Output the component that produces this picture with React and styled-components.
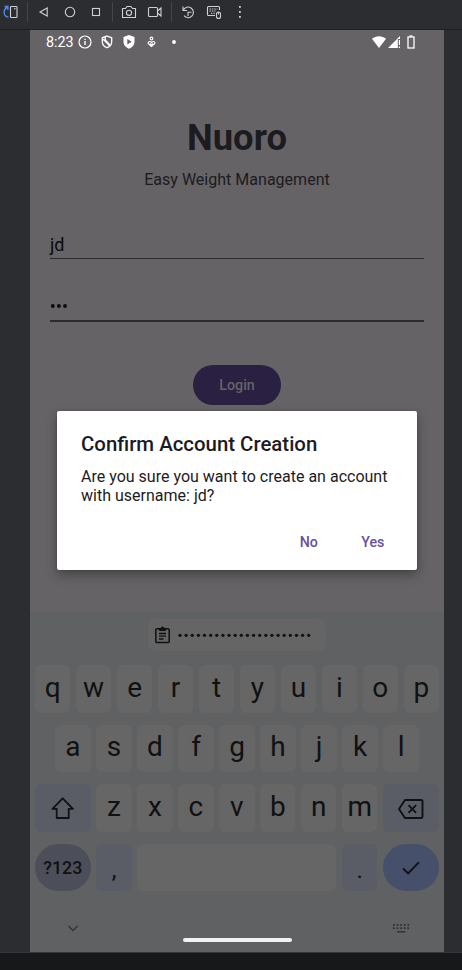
import React from "react";
import styled, { createGlobalStyle } from "styled-components";

const Global = createGlobalStyle`
  * { box-sizing: border-box; }
  html, body { margin: 0; background: #2b2d30; }
  body { font-family: Roboto, "Liberation Sans", sans-serif; }
  svg { display: block; flex: none; overflow: visible; }
`;

const Window = styled.div`
  width: 462px;
  height: 970px;
  overflow: hidden;
  display: flex;
  flex-direction: column;
  background: #2b2d30;
`;

const Toolbar = styled.header`
  height: 30px;
  flex: none;
  padding: 0 0 5px 3px;
  display: flex;
  align-items: center;
  border-bottom: 1px solid #1e1f22;
`;

const Tool = styled.span`
  width: ${(p) => p.$w}px;
  flex: none;
  display: flex;
  justify-content: center;
`;

const Divider = styled.span`
  width: 1px;
  height: 20px;
  background: #43454a;
`;

const Device = styled.main`
  position: relative;
  width: 414px;
  height: 922px;
  margin-left: 30px;
  flex: none;
  display: flex;
  flex-direction: column;
  background: #666366;
`;

const StatusBar = styled.div`
  height: 24px;
  padding: 0 23px 0 16px;
  display: flex;
  align-items: center;
  color: #fff;
`;

const Clock = styled.span`
  width: 32.5px;
  font-size: 14.3px;
  line-height: 24px;
  white-space: nowrap;
`;

const StatusIcon = styled.span`
  width: ${(p) => p.$w}px;
  display: flex;
  justify-content: center;
`;

const Spacer = styled.span`
  flex: 1;
`;

const Login = styled.section`
  flex: 1;
  padding: 0 20px;
  display: flex;
  flex-direction: column;
  align-items: center;
  color: #1c1b1f;
`;

const Brand = styled.h1`
  margin: 62px 0 0;
  font-size: 36.4px;
  line-height: 44px;
  font-weight: 700;
`;

const Tagline = styled.p`
  margin: 10px 0 0;
  font-size: 16.05px;
  line-height: 20px;
`;

const Field = styled.div`
  width: 374px;
  height: ${(p) => p.$h}px;
  margin-top: ${(p) => p.$gap}px;
  border-bottom: ${(p) => p.$line}px solid #2c2a31;
  color: #0b0b0c;
  font-size: 18px;
  line-height: 27px;
`;

const LoginButton = styled.button`
  width: 88.5px;
  height: 40.5px;
  margin-top: 42.5px;
  border: 0;
  padding: 0 0 0 0;
  border-radius: 20.5px;
  background: #292042;
  color: #666366;
  font: 500 14.3px Roboto, sans-serif;
`;

const Dialog = styled.div`
  position: absolute;
  left: 27px;
  top: 381.3px;
  width: 360px;
  height: 158.7px;
  padding: 20.7px 24px 0;
  border-radius: 2px;
  background: #fff;
  color: #1c1b1f;
  box-shadow: 0 5px 12px rgba(0, 0, 0, 0.32), 0 0 3px rgba(0, 0, 0, 0.15);
`;

const DialogTitle = styled.h2`
  margin: 0;
  font-size: 20.4px;
  line-height: 24px;
  font-weight: 500;
  white-space: nowrap;
`;

const DialogText = styled.p`
  margin: 11px 0 0;
  font-size: 16.02px;
  line-height: 19px;
  white-space: nowrap;
`;

const DialogActions = styled.div`
  margin-top: 27.3px;
  padding-right: 8.7px;
  display: flex;
  justify-content: flex-end;
  gap: 43.3px;
`;

const TextButton = styled.button`
  border: 0;
  padding: 0;
  background: none;
  color: #6750a4;
  font: 500 14.2px/20px Roboto, sans-serif;
`;

const Keyboard = styled.section`
  height: 340px;
  flex: none;
  padding: 7px 5px 0;
  background: #606163;
  color: #101112;
`;

const Chip = styled.div`
  width: 178px;
  height: 32px;
  margin: 0 auto 14px 113px;
  padding-left: 7px;
  border-radius: 7px;
  display: flex;
  align-items: center;
  gap: 7.5px;
  background: #656566;
`;

const KeyRow = styled.div`
  height: 47.6px;
  margin-bottom: 12px;
  padding: 0 ${(p) => p.$inset || 0}px;
  display: flex;
  gap: 5.6px;
`;

const keyTone = {
  letter: "#666666",
  side: "#5a5d66",
  symbols: "#4c4f5a",
  enter: "#47506a",
};

const Key = styled.button`
  flex: ${(p) => (p.$w ? `0 0 ${p.$w}px` : "1 1 0")};
  min-width: 0;
  height: 100%;
  border: 0;
  padding: ${(p) => p.$pad || "0 0 2px"};
  border-radius: ${(p) => (p.$round ? 24 : 6)}px;
  display: flex;
  align-items: center;
  justify-content: center;
  background: ${(p) => keyTone[p.$tone || "letter"]};
  color: inherit;
  font-family: Roboto, sans-serif;
  font-size: ${(p) => p.$size || 28}px;
  font-weight: ${(p) => p.$weight || 400};
  line-height: 1;
`;

const NavBar = styled.div`
  height: 50px;
  padding: 0 30.5px 0 33px;
  display: flex;
  align-items: center;
  justify-content: space-between;
  color: #303133;
`;

const HomeHandle = styled.span`
  width: 109px;
  height: 4px;
  margin: 24px 0 0 3.5px;
  border-radius: 2px;
  background: #f2f2f2;
`;

const Footer = styled.footer`
  flex: 1;
  border-top: 1px solid #36383b;
  background: #17181a;
`;

const line = { fill: "none", stroke: "#ced0d6", strokeWidth: 1.1 };

const dots = (n, start, step) => Array.from({ length: n }, (_, i) => start + i * step);

const RotateIcon = () => (
  <svg width="16" height="16" {...line}>
    <rect x="4.5" y="2.5" width="6.5" height="11" rx=".8" />
    <path d="M8 4.8h1.6" />
    <path d="M2.5 13.2C-.5 12.8-1.9 10.8-1.9 8.3-1.9 6-.6 4.3 1.5 2.9M-1.5 2.5H1.9V6" stroke="#548af7" strokeWidth="1.3" />
  </svg>
);
const BackIcon = () => (
  <svg width="10" height="10" {...line}><path d="M8.2 1v8L1 5z" /></svg>
);
const CircleIcon = () => (
  <svg width="12" height="12" {...line}><circle cx="6" cy="6" r="4.7" /></svg>
);
const SquareIcon = () => (
  <svg width="10" height="10" {...line}><rect x="1.5" y="1.5" width="7" height="7" /></svg>
);
const CameraIcon = () => (
  <svg width="16" height="14" {...line}>
    <path d="M1.5 3.5h3L6 1.5h4l1.5 2h3v9h-13z" strokeLinejoin="round" />
    <circle cx="8" cy="7.8" r="2.6" />
  </svg>
);
const VideoIcon = () => (
  <svg width="16" height="12" {...line}>
    <rect x="1.5" y="1.5" width="9" height="9" rx="1" />
    <path d="M10.5 5l3.5-3v8l-3.5-3" />
  </svg>
);
const HistoryIcon = () => (
  <svg width="14" height="14" {...line}>
    <path d="M2 1.5v4h4M2.3 5.2A5.3 5.3 0 1 1 3 10.7M7 11V7.2h3.5" />
  </svg>
);
const InputIcon = () => (
  <svg width="16" height="15" {...line}>
    <path d="M9 10.5H2.5a1 1 0 0 1-1-1v-7a1 1 0 0 1 1-1h10a1 1 0 0 1 1 1V5" />
    <path d="M3.5 4h8M3.5 6h6M5 8.3h4" strokeDasharray="1.4 1" />
    <rect x="10.5" y="7" width="4" height="6.5" rx="2" />
    <path d="M12.5 7v2.5" />
  </svg>
);
const MoreIcon = () => (
  <svg width="4" height="14" fill="#ced0d6">
    {dots(3, 2, 5).map((y) => <rect key={y} x="1" y={y - 1} width="1.8" height="1.8" />)}
  </svg>
);

const InfoIcon = () => (
  <svg width="14" height="14" fill="none" stroke="#fff" strokeWidth="1.2">
    <circle cx="7" cy="7" r="6" /><path d="M7 6v4M7 3.8v1.3" strokeWidth="1.4" />
  </svg>
);
const ShieldOffIcon = () => (
  <svg width="12" height="14" fill="none" stroke="#fff" strokeWidth="1.3">
    <path d="M6 1l4.7 1.8v3.7c0 2.8-2 5.3-4.7 6.2-2.7-.9-4.7-3.4-4.7-6.2V2.8z" />
    <path d="M4.6 1.6C3.2 4.6 4.2 5.6 6 6.8 8 8.2 8.6 9 8.4 11.2M2.2 4.2l6.4 6.6" />
  </svg>
);
const ShieldPlayIcon = () => (
  <svg width="12" height="14">
    <path d="M6 0l5.5 2v4.5c0 3.3-2.3 6.2-5.5 7.2C2.8 12.7.5 9.8.5 6.5V2z" fill="#fff" />
    <path d="M4.3 4v5.4L8.800 6.700z" fill="#666366" />
  </svg>
);
const HeartPersonIcon = () => (
  <svg width="9" height="12" fill="none" stroke="#fff" strokeWidth="1.1">
    <circle cx="4.5" cy="2.5" r="1.4" />
    <path d="M4.5 10.5L1.3 7.7C.5 6.2 2.4 4.5 4.5 6.5 6.6 4.5 8.5 6.2 7.7 7.7zM2.8 7.5l1.7 1.3 1.7-1.3" />
  </svg>
);
const DotIcon = () => (
  <svg width="4" height="4"><circle cx="2" cy="2" r="1.9" fill="#fff" /></svg>
);
const WifiIcon = () => (
  <svg width="14" height="12"><path d="M0 2.8C4-.6 10-.6 14 2.8L7 12z" fill="#fff" /></svg>
);
const SignalIcon = () => (
  <svg width="12" height="12" fill="#fff">
    <path d="M12 0v3H9.8v9H0z" /><path d="M10.8 4H12v5h-1.2zM10.8 10.5H12V12h-1.2z" />
  </svg>
);
const BatteryIcon = () => (
  <svg width="8" height="14" fill="none" stroke="#fff" strokeWidth="1.3">
    <rect x="1" y="2" width="6" height="11" /><path d="M2.5 1h3" />
  </svg>
);

const ClipboardIcon = () => (
  <svg width="15" height="18" fill="none" stroke="#101112" strokeWidth="1.5">
    <rect x=".8" y="2.8" width="13.4" height="13.8" rx="1.2" />
    <path d="M4.5 4.5V2.5h1.5a1.5 1.5 0 0 1 3 0h1.5v2z" fill="#101112" strokeWidth="1" />
    <path d="M4 7.5h7M4 10.2h7M4 13h4.5" strokeWidth="1.3" />
  </svg>
);
const MaskedText = () => (
  <svg width="136" height="4" fill="#101112">
    {dots(22, 2, 6.13).map((x) => <circle key={x} cx={x} cy="2.3" r="1.65" />)}
  </svg>
);
const PasswordDots = () => (
  <svg width="20" height="27" fill="#0b0b0c">
    {dots(3, 2.8, 6.1).map((x) => <circle key={x} cx={x} cy="14" r="1.95" />)}
  </svg>
);
const ShiftIcon = () => (
  <svg width="24" height="24" fill="none" stroke="#101112" strokeWidth="1.8" strokeLinejoin="round">
    <path d="M11.7 2.3L1.5 12.8h4.2v9.2h12v-9.2h4.2z" />
  </svg>
);
const BackspaceIcon = () => (
  <svg width="26" height="20" fill="none" stroke="#101112" strokeWidth="1.9" strokeLinejoin="round">
    <path d="M7 1h16.3a1.2 1.2 0 0 1 1.2 1.2v15.6a1.2 1.2 0 0 1-1.2 1.2H7L1 10z" />
    <path d="M10.5 6.2l7.6 7.6M18.1 6.2l-7.6 7.6" />
  </svg>
);
const CheckIcon = () => (
  <svg width="18" height="14" fill="none" stroke="#101112" strokeWidth="1.9"><path d="M1 7.5L6.2 12.5 17 1.2" /></svg>
);
const ChevronIcon = () => (
  <svg width="10" height="7" fill="none" stroke="#303133" strokeWidth="1.3"><path d="M.5 1L5 5.6 9.5 1" /></svg>
);
const KeyboardIcon = () => (
  <svg width="16" height="9" fill="#303133">
    {[0, 3.3].map((y) => dots(5, 0, 3.6).map((x) => <rect key={`${x}-${y}`} x={x} y={y} width="1.7" height="1.8" />))}
    <rect x="4" y="7.1" width="8.4" height="1.4" />
  </svg>
);

const tools = [
  [22.6, RotateIcon], [3.8, null], [29.2, BackIcon], [22.8, CircleIcon], [29.2, SquareIcon], [3.8, null],
  [29.2, CameraIcon], [23.4, VideoIcon], [8.6, null],
  [24.8, HistoryIcon], [27.2, InputIcon], [24.8, MoreIcon],
];

export default function App() {
  return (
    <>
      <Global />
      <Window>
        <Toolbar>
          {tools.map(([w, Icon], i) => (
            <Tool key={i} $w={w}>{Icon ? <Icon /> : <Divider />}</Tool>
          ))}
        </Toolbar>
        <Device>
          <StatusBar>
            <Clock>8:23</Clock>
            <StatusIcon $w={13}><InfoIcon /></StatusIcon>
            <StatusIcon $w={31}><ShieldOffIcon /></StatusIcon>
            <StatusIcon $w={13}><ShieldPlayIcon /></StatusIcon>
            <StatusIcon $w={31}><HeartPersonIcon /></StatusIcon>
            <StatusIcon $w={14}><DotIcon /></StatusIcon>
            <Spacer />
            <StatusIcon $w={16}><WifiIcon /></StatusIcon>
            <StatusIcon $w={14}><SignalIcon /></StatusIcon>
            <StatusIcon $w={20}><BatteryIcon /></StatusIcon>
          </StatusBar>
          <Login>
            <Brand>Nuoro</Brand>
            <Tagline>Easy Weight Management</Tagline>
            <Field $h={28} $gap={41} $line={1}>jd</Field>
            <Field $h={30} $gap={33} $line={2}><PasswordDots /></Field>
            <LoginButton>Login</LoginButton>
          </Login>
          <Keyboard>
            <Chip><ClipboardIcon /><MaskedText /></Chip>
            <KeyRow>
              {[..."qwertyuiop"].map((c) => <Key key={c}>{c}</Key>)}
            </KeyRow>
            <KeyRow $inset={20.2}>
              {[..."asdfghjkl"].map((c) => <Key key={c}>{c}</Key>)}
            </KeyRow>
            <KeyRow>
              <Key $w={55.7} $tone="side" $pad="0"><ShiftIcon /></Key>
              {[..."zxcvbnm"].map((c) => <Key key={c}>{c}</Key>)}
              <Key $w={56} $tone="side" $pad="2px 0 0"><BackspaceIcon /></Key>
            </KeyRow>
            <KeyRow>
              <Key $w={55.7} $tone="symbols" $round $size={17.8} $weight={500} $pad="0">?123</Key>
              <Key $w={35.5} $tone="side" $size={24} $pad="5px 0 0">,</Key>
              <Key aria-label="space" />
              <Key $w={35.7} $tone="side" $size={24} $pad="5px 0 0">.</Key>
              <Key $w={56} $tone="enter" $round $pad="0"><CheckIcon /></Key>
            </KeyRow>
            <NavBar>
              <ChevronIcon />
              <HomeHandle />
              <KeyboardIcon />
            </NavBar>
          </Keyboard>
          <Dialog role="dialog">
            <DialogTitle>Confirm Account Creation</DialogTitle>
            <DialogText>
              Are you sure you want to create an account<br />with username: jd?
            </DialogText>
            <DialogActions>
              <TextButton>No</TextButton>
              <TextButton>Yes</TextButton>
            </DialogActions>
          </Dialog>
        </Device>
        <Footer />
      </Window>
    </>
  );
}
